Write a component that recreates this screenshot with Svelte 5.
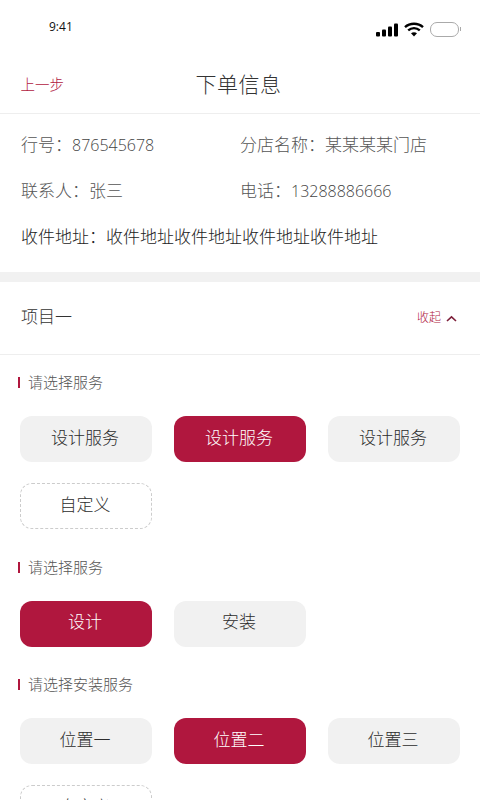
<script lang="ts">
	const infoRows = [
		[
			{ label: '行号：', num: '876545678' },
			{ label: '分店名称：某某某某门店' }
		],
		[
			{ label: '联系人：张三' },
			{ label: '电话：', num: '13288886666' }
		]
	];

	const groups = [
		{
			label: '请选择服务',
			options: [
				{ text: '设计服务' },
				{ text: '设计服务', active: true },
				{ text: '设计服务' },
				{ text: '自定义', custom: true }
			]
		},
		{
			label: '请选择服务',
			options: [{ text: '设计', active: true }, { text: '安装' }]
		},
		{
			label: '请选择安装服务',
			options: [
				{ text: '位置一' },
				{ text: '位置二', active: true },
				{ text: '位置三' },
				{ text: '自定义', custom: true }
			]
		}
	];
</script>

<div class="page">
	<div class="status">
		<span class="time">9:41</span>
		<div class="status-icons">
			<svg width="22" height="14" viewBox="0 0 22 14" aria-hidden="true">
				<rect x="0" y="9" width="4" height="4.5" rx="1" />
				<rect x="6" y="6.5" width="4" height="7" rx="1" />
				<rect x="12" y="3.5" width="4" height="10" rx="1" />
				<rect x="18" y="0.5" width="4" height="13" rx="1" />
			</svg>
			<svg class="wifi" width="20" height="15" viewBox="0 0 20 15" aria-hidden="true">
				<path d="M1 5.2 C6 0.6 14 0.6 19 5.2" />
				<path d="M4.2 8.4 C7.6 5.4 12.4 5.4 15.8 8.4" />
				<path class="wifi-dot" d="M7 11.2 C8.8 9.8 11.2 9.8 13 11.2 L10 14.4 Z" />
			</svg>
			<div class="battery"></div>
		</div>
	</div>

	<header class="nav">
		<span class="back">上一步</span>
		<h1>下单信息</h1>
	</header>

	<section class="info">
		{#each infoRows as row}
			<div class="info-row">
				{#each row as cell}
					<span>{cell.label}{#if cell.num}<span class="num">{cell.num}</span>{/if}</span>
				{/each}
			</div>
		{/each}
		<div class="address">收件地址：收件地址收件地址收件地址收件地址</div>
	</section>

	<section class="project">
		<div class="project-head">
			<span class="project-name">项目一</span>
			<span class="collapse">
				<span class="collapse-text">收起</span>
				<svg width="11" height="7" viewBox="0 0 11 7" aria-hidden="true">
					<path d="M1 6 L5.5 1.8 L10 6" />
				</svg>
			</span>
		</div>

		{#each groups as group}
			<div class="group">
				<div class="group-label">{group.label}</div>
				<div class="options">
					{#each group.options as option}
						<div class="option" class:active={option.active} class:custom={option.custom}>{option.text}</div>
					{/each}
				</div>
			</div>
		{/each}
	</section>
</div>

<style>
	:global(body) {
		background: #fff;
	}

	.page {
		height: 800px;
		overflow: hidden;
		background: #fff;
		color: #333;
		font-family: 'Noto Sans CJK SC', 'Open Sans', sans-serif;
		font-weight: 300;
	}

	.status {
		display: flex;
		align-items: center;
		justify-content: space-between;
		height: 54px;
		padding: 0 21px 0 49px;
		box-sizing: border-box;
	}

	.time {
		margin-bottom: 1px;
		color: #111;
		font-family: 'Open Sans', sans-serif;
		font-size: 12px;
		font-weight: 400;
	}

	.status-icons {
		display: flex;
		align-items: center;
		gap: 6px;
		margin-top: 5px;
	}

	.status-icons rect {
		fill: #000;
	}

	.wifi path {
		fill: none;
		stroke: #000;
		stroke-width: 2.4;
	}

	.wifi .wifi-dot {
		fill: #000;
		stroke: none;
	}

	.battery {
		position: relative;
		width: 27px;
		height: 13px;
		border: 1px solid #aaa;
		border-radius: 7px;
	}

	.battery::after {
		position: absolute;
		top: 4px;
		right: -3px;
		width: 1px;
		height: 4px;
		background: #aaa;
		content: '';
	}

	.nav {
		position: relative;
		display: flex;
		align-items: center;
		justify-content: center;
		height: 60px;
		padding: 0 3px 2px 0;
		border-bottom: 1px solid #eee;
		box-sizing: border-box;
	}

	.nav h1 {
		margin: 0;
		color: #333;
		font-size: 21px;
		font-weight: 300;
		letter-spacing: 0.5px;
	}

	.back {
		position: absolute;
		left: 20.5px;
		top: 19px;
		color: #b01840;
		font-size: 14.5px;
	}

	.info {
		display: flex;
		flex-direction: column;
		gap: 22px;
		height: 168px;
		padding: 18px 21px 0;
		box-sizing: border-box;
		border-bottom: 10px solid #f1f1f1;
		color: #555;
		font-size: 17px;
		line-height: 24px;
	}

	.info-row {
		display: grid;
		grid-template-columns: 219px 1fr;
	}

	.num {
		color: #444;
		font-family: 'Open Sans', sans-serif;
		font-size: 16px;
		line-height: 1;
	}

	.address {
		color: #222;
	}

	.project-head {
		display: flex;
		align-items: center;
		justify-content: space-between;
		height: 73px;
		padding: 0 21px;
		box-sizing: border-box;
		border-bottom: 1px solid #eee;
	}

	.project-name {
		margin-bottom: 6px;
		font-size: 17px;
	}

	.collapse {
		display: flex;
		align-items: center;
		gap: 5px;
		margin-right: 2px;
		color: #b01840;
		font-size: 12px;
	}

	.collapse-text {
		margin-bottom: 3px;
	}

	.collapse path {
		fill: none;
		stroke: #7d1f3a;
		stroke-width: 1.6;
	}

	.group-label {
		position: relative;
		padding-left: 28px;
		color: #555;
		font-size: 15px;
		line-height: 20px;
	}

	.group-label::before {
		position: absolute;
		top: 5px;
		left: 18px;
		width: 2px;
		height: 11px;
		background: #b0173e;
		content: '';
	}

	.group {
		padding-top: 17px;
	}

	.group + .group {
		padding-top: 0;
		margin-top: 27.5px;
	}

	.options {
		display: grid;
		grid-template-columns: repeat(3, 132px);
		gap: 21px 22px;
		margin-top: 24px;
		padding: 0 20px;
	}

	.option {
		display: flex;
		align-items: center;
		justify-content: center;
		height: 46px;
		padding: 0 2px 6px 0;
		box-sizing: border-box;
		border-radius: 12px;
		background: #f1f1f1;
		color: #2c2c2c;
		font-size: 17px;
	}

	.option.active {
		background: #b0173e;
		color: #fff;
	}

	.option.custom {
		border: 1px dashed #ccc;
		background: #fff;
	}
</style>
